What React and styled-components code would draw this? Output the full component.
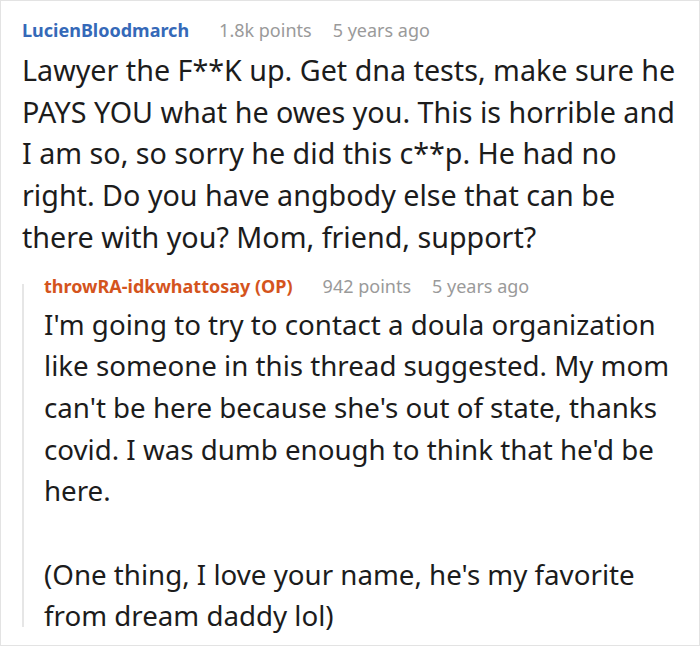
import React from "react";
import styled, { createGlobalStyle } from "styled-components";

const Global = createGlobalStyle`
  html, body { margin: 0; padding: 0; background: #fff; }
  * { box-sizing: border-box; }
`;

const Frame = styled.div`
  width: 700px;
  height: 646px;
  border: 1px solid #e3e3e3;
  background: #fff;
  font-family: "Noto Sans", "Open Sans", sans-serif;
  padding: 17px 12px 0 21px;
  overflow: hidden;
`;

const Comment = styled.div`
  display: flex;
  flex-direction: column;
`;

const Meta = styled.div`
  display: flex;
  align-items: baseline;
  font-size: 18px;
  line-height: 24px;
  white-space: nowrap;
`;

const Author = styled.span`
  font-weight: 700;
  color: ${(p) => (p.$op ? "#d4541d" : "#3569b8")};
  margin-right: 30px;
`;

const Points = styled.span`
  color: #9a9a9a;
  margin-right: 21px;
`;

const Time = styled.span`
  color: #9a9a9a;
`;

const Body = styled.div`
  margin-top: ${(p) => (p.$reply ? "6px" : "7px")};
  font-size: ${(p) => (p.$reply ? "27.7px" : "28.7px")};
  line-height: 41.7px;
  color: #1c1c1c;
  white-space: pre-line;
`;

const Reply = styled.div`
  display: flex;
  margin-top: 16px;
`;

const Thread = styled.div`
  width: 2px;
  flex: none;
  background: #e6e6e6;
  margin: 10px 20px 10px 0;
`;

export default function App() {
  return (
    <>
      <Global />
      <Frame>
        <Comment>
          <Meta>
            <Author>LucienBloodmarch</Author>
            <Points>1.8k points</Points>
            <Time>5 years ago</Time>
          </Meta>
          <Body>
            Lawyer the F**K up. Get dna tests, make sure he PAYS YOU what he owes you. This is horrible and I am so, so sorry he did this c**p. He had no right. Do you have angbody else that can be there with you? Mom, friend, support?
          </Body>
        </Comment>
        <Reply>
          <Thread />
          <Comment>
            <Meta>
              <Author $op>throwRA-idkwhattosay (OP)</Author>
              <Points>942 points</Points>
              <Time>5 years ago</Time>
            </Meta>
            <Body $reply>
              {"I'm going to try to contact a doula organization like someone in this thread suggested. My mom can't be here because she's out of state, thanks covid. I was dumb enough to think that he'd be here.\n\n(One thing, I love your name, he's my favorite from dream daddy lol)"}
            </Body>
          </Comment>
        </Reply>
      </Frame>
    </>
  );
}
